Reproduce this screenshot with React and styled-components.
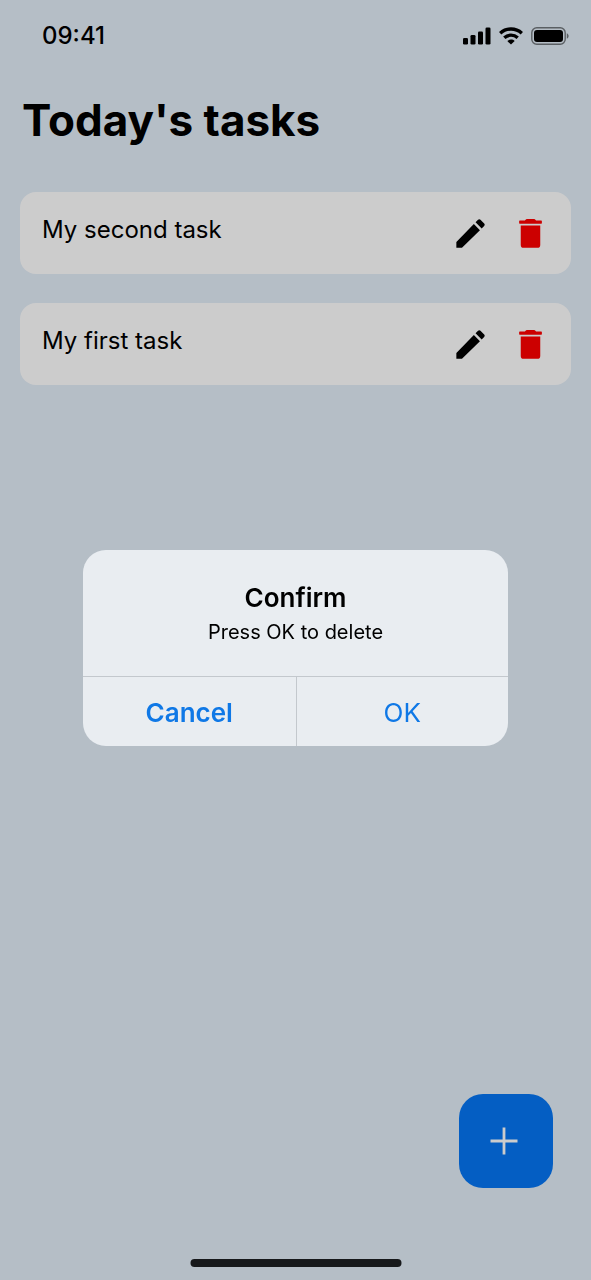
import React from "react";
import styled, { createGlobalStyle } from "styled-components";

const GlobalStyle = createGlobalStyle`
  *, *::before, *::after { box-sizing: border-box; }
  body {
    margin: 0;
    background: #e3eef8;
    color: #000;
    font-family: Inter, "Liberation Sans", sans-serif;
  }
  button { font-family: inherit; margin: 0; padding: 0; border: 0; background: none; cursor: pointer; }
  svg { display: block; }
`;

const Screen = styled.div`
  display: flex;
  flex-direction: column;
  min-height: 100vh;
`;

const StatusBar = styled.header`
  display: flex;
  align-items: center;
  justify-content: space-between;
  height: 72px;
  padding: 0 22px 0 42px;
`;

const Clock = styled.time`
  font-size: 24px;
  line-height: 28px;
  font-weight: 500;
`;

const StatusIcons = styled.div`
  display: flex;
  align-items: center;
  gap: 8px;
`;

const Main = styled.main`
  flex: 1;
  padding: 20px 20px 0;
`;

const Title = styled.h1`
  margin: 0 0 44px;
  padding-left: 2px;
  font-size: 44px;
  line-height: 56px;
  font-weight: 700;
`;

const TaskList = styled.ul`
  display: flex;
  flex-direction: column;
  gap: 29px;
  margin: 0;
  padding: 0;
  list-style: none;
`;

const TaskCard = styled.li`
  display: flex;
  align-items: center;
  gap: 21px;
  height: 82px;
  padding: 0 21px 0 22px;
  border-radius: 16px;
  background: #fff;
`;

const TaskName = styled.span`
  flex: 1;
  padding-bottom: 6px;
  font-size: 24px;
  line-height: 30px;
`;

const IconButton = styled.button`
  width: 39px;
  height: 39px;
  color: ${(p) => p.$color};
`;

const BottomBar = styled.footer`
  display: flex;
  justify-content: flex-end;
  padding: 0 38px 92px;
`;

const AddButton = styled.button`
  display: grid;
  place-items: center;
  width: 94px;
  height: 94px;
  padding-right: 4px;
  border-radius: 24px;
  background: #0576f4;
`;

const Overlay = styled.div`
  position: fixed;
  inset: 0;
  display: flex;
  align-items: center;
  justify-content: center;
  padding: 16px 20px 0;
  background: rgba(0, 0, 0, 0.2);
`;

const Dialog = styled.div`
  width: 100%;
  max-width: 425px;
  overflow: hidden;
  border-radius: 23px;
  background: #e9edf1;
`;

const DialogBody = styled.div`
  padding: 31px 20px 31px;
  text-align: center;
`;

const DialogTitle = styled.h2`
  margin: 0 0 4px;
  font-size: 26px;
  line-height: 34px;
  font-weight: 600;
`;

const DialogText = styled.p`
  margin: 0;
  font-size: 20px;
  line-height: 26px;
`;

const DialogActions = styled.div`
  display: grid;
  grid-template-columns: 1fr 1fr;
  border-top: 1px solid #c3c8cd;
`;

const DialogButton = styled.button`
  height: 69px;
  padding-top: 2px;
  color: #0f78e6;
  font-size: 26px;
  line-height: 34px;
  font-weight: ${(p) => (p.$strong ? 600 : 400)};

  & + & { border-left: 1px solid #c3c8cd; }
`;

const HomeIndicator = styled.div`
  position: fixed;
  bottom: 13px;
  left: 50%;
  width: 211px;
  height: 8px;
  border-radius: 4px;
  background: #17191b;
  transform: translateX(-50%);
`;

const SignalIcon = () => (
  <svg width="28" height="18" viewBox="0 0 28 18" aria-hidden="true">
    <rect x="0" y="11" width="5" height="6.5" rx="1.3" />
    <rect x="7.5" y="8" width="5" height="9.5" rx="1.3" />
    <rect x="15" y="4.5" width="5" height="13" rx="1.3" />
    <rect x="22.5" y="0.5" width="5" height="17" rx="1.3" />
  </svg>
);

const WifiIcon = () => (
  <svg width="24" height="18" viewBox="0 0 24 18" aria-hidden="true">
    <g fill="none" stroke="#000" strokeWidth="3.4">
      <path d="M1.2 6.2C7.2 0.6 16.8 0.6 22.8 6.2" />
      <path d="M5.3 10.7C9.1 7.3 14.9 7.3 18.7 10.7" />
    </g>
    <path d="M8.3 14C10.3 12.1 13.7 12.1 15.7 14L12 17.6Z" />
  </svg>
);

const BatteryIcon = () => (
  <svg width="38" height="18" viewBox="0 0 38 18" aria-hidden="true">
    <rect x="0.8" y="0.8" width="33.4" height="16.4" rx="5" fill="none" stroke="#000" strokeOpacity="0.5" strokeWidth="1.4" />
    <rect x="3" y="3" width="29" height="12" rx="3" />
    <path d="M35.8 6.2V11.8C38.2 10.8 38.2 7.2 35.8 6.2Z" fillOpacity="0.5" />
  </svg>
);

const PencilIcon = () => (
  <svg width="39" height="39" viewBox="0 0 24 24" fill="currentColor" aria-hidden="true">
    <path d="M20.4 7.35C20.85 6.9 20.85 6.3 20.4 5.85L18.15 3.6C17.7 3.15 17.1 3.15 16.65 3.6L15.12 5.12L18.87 8.87ZM3.3 17.25V20.7H6.75L17.81 9.93L14.06 6.18Z" />
  </svg>
);

const TrashIcon = () => (
  <svg width="39" height="39" viewBox="0 0 24 24" fill="currentColor" aria-hidden="true">
    <path d="M18.6 4H15.4C14.9 3.3 14.4 3.1 13.8 3.1H10.2C9.6 3.1 9.1 3.3 8.6 4H5.4C5.1 4 5 4.2 5 4.5V5.5C5 5.8 5.1 6 5.4 6H18.6C18.9 6 19 5.8 19 5.5V4.5C19 4.2 18.9 4 18.6 4ZM6 19A1.8 1.8 0 0 0 7.8 20.8H16.2A1.8 1.8 0 0 0 18 19V7H6V19Z" />
  </svg>
);

const PlusIcon = () => (
  <svg width="28" height="28" viewBox="0 0 28 28" aria-hidden="true">
    <path d="M14 0.5V27.5M0.5 14H27.5" stroke="#fff" strokeWidth="2.8" />
  </svg>
);

const tasks = ["My second task", "My first task"];

export default function App() {
  return (
    <>
      <GlobalStyle />
      <Screen>
        <StatusBar>
          <Clock>09:41</Clock>
          <StatusIcons>
            <SignalIcon />
            <WifiIcon />
            <BatteryIcon />
          </StatusIcons>
        </StatusBar>
        <Main>
          <Title>Today's tasks</Title>
          <TaskList>
            {tasks.map((task) => (
              <TaskCard key={task}>
                <TaskName>{task}</TaskName>
                <IconButton type="button" $color="#000" aria-label={`Edit ${task}`}>
                  <PencilIcon />
                </IconButton>
                <IconButton type="button" $color="#ff0000" aria-label={`Delete ${task}`}>
                  <TrashIcon />
                </IconButton>
              </TaskCard>
            ))}
          </TaskList>
        </Main>
        <BottomBar>
          <AddButton type="button" aria-label="Add task">
            <PlusIcon />
          </AddButton>
        </BottomBar>
      </Screen>
      <Overlay>
        <Dialog role="alertdialog" aria-modal="true" aria-labelledby="confirm-title" aria-describedby="confirm-text">
          <DialogBody>
            <DialogTitle id="confirm-title">Confirm</DialogTitle>
            <DialogText id="confirm-text">Press OK to delete</DialogText>
          </DialogBody>
          <DialogActions>
            <DialogButton type="button" $strong>Cancel</DialogButton>
            <DialogButton type="button">OK</DialogButton>
          </DialogActions>
        </Dialog>
      </Overlay>
      <HomeIndicator />
    </>
  );
}
